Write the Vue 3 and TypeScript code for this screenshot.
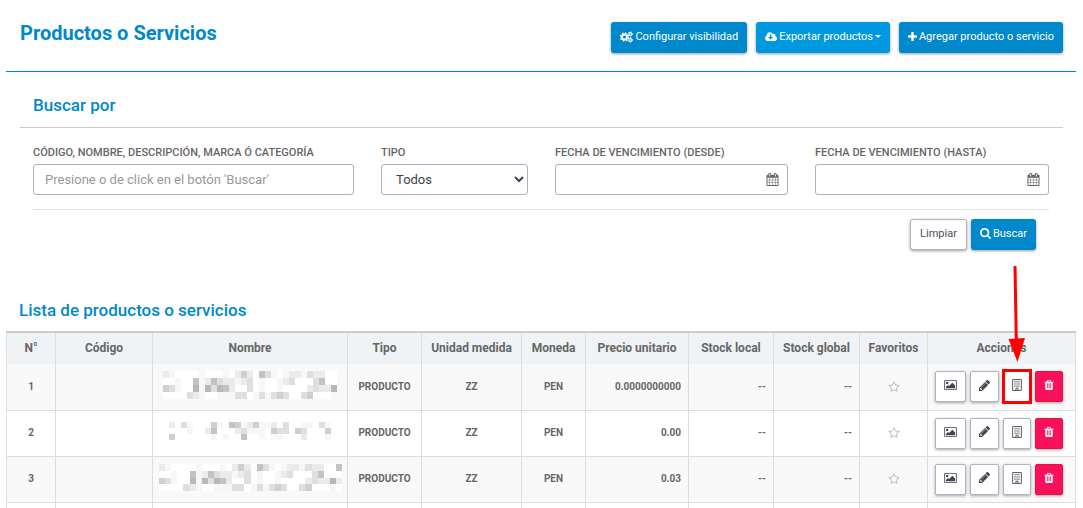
<script setup lang="ts">
import { ref } from 'vue'

interface Mask {
  width: number
  height: number
  lines: string[]
}

interface Product {
  id: number
  price: string
  mask: Mask
}

const shades = ['#ffffff', '#f7f7f7', '#ebebeb', '#dfdfdf', '#cfcfcf', '#c3c3c3', '#b8b8b8']

const products: Product[] = [
  {
    id: 1,
    price: '0.0000000000',
    mask: {
      width: 174,
      height: 28,
      lines: [
        '21000010001024205310122132200',
        '00100512532212301001230003500',
        '43100616365200301001000023226',
        '00003210011133013134300340001',
      ],
    },
  },
  {
    id: 2,
    price: '0.00',
    mask: {
      width: 162,
      height: 18,
      lines: [
        '203100041054124112030011031',
        '000100250002311104330430004',
        '400000010100500101100020001',
      ],
    },
  },
  {
    id: 3,
    price: '0.03',
    mask: {
      width: 183,
      height: 27,
      lines: [
        '210000100010242053101221322005',
        '001005125322123010012300035000',
        '431006163652003010010000232262',
        '000032100111330131343003400010',
      ],
    },
  },
]

const headings = [
  'N°', 'Código', 'Nombre', 'Tipo', 'Unidad medida', 'Moneda',
  'Precio unitario', 'Stock local', 'Stock global', 'Favoritos', 'Acciones',
]

const search = ref('')
const kind = ref('Todos')
const from = ref('')
const to = ref('')

function clearFilters(): void {
  search.value = ''
  kind.value = 'Todos'
  from.value = ''
  to.value = ''
}

const calendarPath =
  'M192 1664h288v-288h-288v288zm352 0h320v-288h-320v288zm-352-352h288v-320h-288v320zm352 0h320v-320h-320v320zm-352-384h288v-288h-288v288zm736 736h320v-288h-320v288zm-384-736h320v-288h-320v288zm768 736h288v-288h-288v288zm-384-352h320v-320h-320v320zm-352-864v-288q0-13-9.500-22.500t-22.500-9.500h-64q-13 0-22.500 9.500t-9.500 22.500v288q0 13 9.500 22.500t22.500 9.500h64q13 0 22.500-9.500t9.500-22.500zm736 864h288v-320h-288v320zm-384-384h320v-288h-320v288zm384 0h288v-288h-288v288zm32-480v-288q0-13-9.500-22.500t-22.500-9.500h-64q-13 0-22.500 9.500t-9.500 22.500v288q0 13 9.500 22.500t22.500 9.500h64q13 0 22.500-9.500t9.500-22.500zm384-64v1280q0 52-38 90t-90 38h-1408q-52 0-90-38t-38-90v-1280q0-52 38-90t90-38h128v-96q0-66 47-113t113-47h64q66 0 113 47t47 113v96h384v-96q0-66 47-113t113-47h64q66 0 113 47t47 113v96h128q52 0 90 38t38 90z'
</script>

<template>
  <main class="page">
    <header class="top">
      <h1>Productos o Servicios</h1>
      <div class="top-actions">
        <button type="button" class="btn primary">
          <svg class="cogs" viewBox="0 0 13 12" aria-hidden="true">
            <g fill="none" stroke="currentColor">
              <circle cx="4.500" cy="6" r="2.600" stroke-width="2" />
              <circle cx="4.500" cy="6" r="4" stroke-width="1.400" stroke-dasharray="1.570 1.570" />
              <circle cx="10.300" cy="3" r="1.400" stroke-width="1.100" />
              <circle cx="10.300" cy="3" r="2.200" stroke-width="0.900" stroke-dasharray="1.150 1.150" />
              <circle cx="10.300" cy="9" r="1.400" stroke-width="1.100" />
              <circle cx="10.300" cy="9" r="2.200" stroke-width="0.900" stroke-dasharray="1.150 1.150" />
            </g>
          </svg>
          <span>Configurar visibilidad</span>
        </button>
        <button type="button" class="btn info">
          <svg class="cloud" viewBox="0 0 1920 1792" aria-hidden="true">
            <path fill="currentColor" d="M1280 928q0-14-9-23t-23-9h-224v-352q0-13-9.500-22.500t-22.500-9.500h-192q-13 0-22.500 9.500t-9.500 22.500v352h-224q-13 0-22.500 9.500t-9.500 22.500q0 14 9 23l352 352q9 9 23 9t23-9l351-351q10-12 10-24zm640 224q0 159-112.500 271.500t-271.500 112.500h-1088q-185 0-316.500-131.500t-131.500-316.500q0-130 70-240t188-165q-2-30-2-43 0-212 150-362t362-150q156 0 285.500 87t188.500 231q71-62 166-62 106 0 181 75t75 181q0 76-41 138 130 31 213.500 135.500t83.500 238.500z" />
          </svg>
          <span>Exportar productos</span>
          <i class="caret"></i>
        </button>
        <button type="button" class="btn primary">
          <svg class="plus" viewBox="192 128 1408 1408" aria-hidden="true">
            <path fill="currentColor" d="M1600 736v192q0 40-28 68t-68 28h-416v416q0 40-28 68t-68 28h-192q-40 0-68-28t-28-68v-416h-416q-40 0-68-28t-28-68v-192q0-40 28-68t68-28h416v-416q0-40 28-68t68-28h192q40 0 68 28t28 68v416h416q40 0 68 28t28 68z" />
          </svg>
          <span>Agregar producto o servicio</span>
        </button>
      </div>
    </header>

    <section class="filters">
      <h2>Buscar por</h2>
      <form @submit.prevent>
        <div class="fields">
          <div class="field">
            <label for="search">Código, nombre, descripción, marca ó categoría</label>
            <input id="search" v-model="search" class="control" type="text" placeholder="Presione o de click en el botón 'Buscar'" />
          </div>
          <div class="field">
            <label for="kind">Tipo</label>
            <select id="kind" v-model="kind" class="control">
              <option>Todos</option>
              <option>Producto</option>
              <option>Servicio</option>
            </select>
          </div>
          <div class="field">
            <label for="from">Fecha de vencimiento (desde)</label>
            <div class="control date">
              <input id="from" v-model="from" type="text" />
              <svg viewBox="0 0 1792 1792" aria-hidden="true"><path :d="calendarPath" fill="currentColor" /></svg>
            </div>
          </div>
          <div class="field">
            <label for="to">Fecha de vencimiento (hasta)</label>
            <div class="control date">
              <input id="to" v-model="to" type="text" />
              <svg viewBox="0 0 1792 1792" aria-hidden="true"><path :d="calendarPath" fill="currentColor" /></svg>
            </div>
          </div>
        </div>
        <div class="form-actions">
          <button type="button" class="btn plain" @click="clearFilters">Limpiar</button>
          <button type="submit" class="btn primary">
            <svg class="lens" viewBox="64 128 1664 1664" aria-hidden="true">
              <path fill="currentColor" d="M1216 832q0-185-131.500-316.500t-316.500-131.500-316.500 131.500-131.500 316.500 131.500 316.500 316.500 131.500 316.500-131.500 131.500-316.500zm512 832q0 52-38 90t-90 38q-54 0-90-38l-343-342q-179 124-399 124-143 0-273.500-55.500t-225-150-150-225-55.500-273.500 55.500-273.500 150-225 225-150 273.500-55.500 273.500 55.500 225 150 150 225 55.500 273.500q0 220-124 399l343 343q37 37 37 90z" />
            </svg>
            <span>Buscar</span>
          </button>
        </div>
      </form>
    </section>

    <section class="list">
      <h2>Lista de productos o servicios</h2>
      <table>
        <colgroup>
          <col class="c-num" /><col class="c-code" /><col /><col class="c-type" /><col class="c-unit" />
          <col class="c-coin" /><col class="c-price" /><col class="c-local" /><col class="c-global" />
          <col class="c-fav" /><col class="c-act" />
        </colgroup>
        <thead>
          <tr>
            <th v-for="heading in headings" :key="heading" scope="col">{{ heading }}</th>
          </tr>
        </thead>
        <tbody>
          <tr v-for="(product, index) in products" :key="product.id">
            <td>{{ product.id }}</td>
            <td></td>
            <td class="name">
              <svg
                class="mask"
                :width="product.mask.width"
                :height="product.mask.height"
                :viewBox="`0 0 ${product.mask.lines[0].length} ${product.mask.lines.length}`"
                preserveAspectRatio="none"
                shape-rendering="crispEdges"
                aria-hidden="true"
              >
                <template v-for="(line, y) in product.mask.lines" :key="y">
                  <rect v-for="(shade, x) in line.split('')" :key="x" :x="x" :y="y" width="1" height="1" :fill="shades[Number(shade)]" />
                </template>
              </svg>
            </td>
            <td>PRODUCTO</td>
            <td>ZZ</td>
            <td>PEN</td>
            <td class="number">{{ product.price }}</td>
            <td class="number">--</td>
            <td class="number">--</td>
            <td>
              <button type="button" class="star" aria-label="Favorito">
                <svg viewBox="0 0 1792 1792" aria-hidden="true">
                  <path fill="currentColor" d="M1201 1004l306-297-422-62-189-382-189 382-422 62 306 297-73 421 378-199 377 199zm527-357q0 22-26 48l-363 354 86 500q1 7 1 20 0 50-41 50-19 0-40-12l-449-236-449 236q-22 12-40 12-21 0-31.500-14.500t-10.500-35.500q0-6 2-20l86-500-364-354q-25-27-25-48 0-37 56-46l502-73 225-455q19-41 49-41t49 41l225 455 502 73q56 9 56 46z" />
                </svg>
              </button>
            </td>
            <td>
              <div class="actions">
                <button type="button" class="act" aria-label="Imagen">
                  <svg class="picture" viewBox="-64 128 1920 1536" aria-hidden="true">
                    <path fill="currentColor" d="M576 576q0 80-56 136t-136 56-136-56-56-136 56-136 136-56 136 56 56 136zm1024 384v448h-1408v-192l320-320 160 160 512-512zm96-704h-1600q-13 0-22.500 9.500t-9.500 22.500v1216q0 13 9.500 22.500t22.500 9.500h1600q13 0 22.500-9.500t9.500-22.500v-1216q0-13-9.500-22.500t-22.500-9.500zm160 32v1216q0 66-47 113t-113 47h-1600q-66 0-113-47t-47-113v-1216q0-66 47-113t113-47h1600q66 0 113 47t47 113z" />
                  </svg>
                </button>
                <button type="button" class="act" aria-label="Editar">
                  <svg class="pencil" viewBox="128 148 1516 1516" aria-hidden="true">
                    <path fill="currentColor" d="M491 1536l91-91-235-235-91 91v107h128v128h107zm523-928q0-22-22-22-10 0-17 7l-542 542q-7 7-7 17 0 22 22 22 10 0 17-7l542-542q7-7 7-17zm-54-192l416 416-832 832h-416v-416zm683 96q0 53-37 90l-166 166-416-416 166-165q36-38 90-38 53 0 91 38l235 234q37 39 37 91z" />
                  </svg>
                </button>
                <span class="stock">
                  <button type="button" class="act" aria-label="Almacenes">
                    <svg class="building" viewBox="0 0 9 11" aria-hidden="true">
                      <path fill="none" stroke="currentColor" stroke-width="0.800" d="M0.500 0.500h8v10h-8zM3.500 10.500v-2h2v2" />
                      <path fill="none" stroke="currentColor" stroke-width="0.900" stroke-dasharray="1 0.800" d="M2.200 2.200h4.600M2.200 3.800h4.600M2.200 5.400h4.600M2.200 7h4.600" />
                    </svg>
                  </button>
                  <template v-if="index === 0">
                    <i class="frame"></i>
                    <svg class="arrow" width="18" height="97" viewBox="0 0 18 97" aria-hidden="true">
                      <path d="M7 1L8.300 76" stroke="#ff0000" stroke-width="3" />
                      <path d="M0.500 74L17 73L9.500 97z" fill="#ff0000" />
                    </svg>
                  </template>
                </span>
                <button type="button" class="act danger" aria-label="Eliminar">
                  <svg class="trash" viewBox="192 128 1408 1536" aria-hidden="true">
                    <path fill="currentColor" d="M704 1376v-704q0-14-9-23t-23-9h-64q-14 0-23 9t-9 23v704q0 14 9 23t23 9h64q14 0 23-9t9-23zm256 0v-704q0-14-9-23t-23-9h-64q-14 0-23 9t-9 23v704q0 14 9 23t23 9h64q14 0 23-9t9-23zm256 0v-704q0-14-9-23t-23-9h-64q-14 0-23 9t-9 23v704q0 14 9 23t23 9h64q14 0 23-9t9-23zm-544-992h448l-48-117q-7-9-17-11h-317q-10 2-17 11zm928 32v64q0 14-9 23t-23 9h-96v948q0 83-47 143.500t-113 60.500h-832q-66 0-113-58.500t-47-141.500v-952h-96q-14 0-23-9t-9-23v-64q0-14 9-23t23-9h309l70-167q15-37 54-63t79-26h320q40 0 79 26t54 63l70 167h309q14 0 23 9t9 23z" />
                  </svg>
                </button>
              </div>
            </td>
          </tr>
          <tr>
            <td v-for="heading in headings" :key="heading"></td>
          </tr>
        </tbody>
      </table>
    </section>
  </main>
</template>

<style>
body {
  margin: 0;
  background: #ffffff;
}
</style>

<style scoped>
* {
  box-sizing: border-box;
}

.page {
  height: 100vh;
  overflow: hidden;
  padding: 0 7px 0 6px;
  font-family: Roboto, "Liberation Sans", sans-serif;
  color: #666666;
}

h1,
h2 {
  margin: 0;
  color: #0088cc;
  font-weight: 500;
}

h1 {
  font-size: 20px;
  font-weight: 700;
  line-height: 24px;
}

h2 {
  font-size: 17px;
  line-height: 20px;
}

.top {
  display: flex;
  justify-content: space-between;
  align-items: flex-start;
  padding: 21px 13px 18px 14px;
  border-bottom: 1px solid #0088cc;
}

.top-actions {
  display: flex;
  gap: 9px;
  padding-top: 1px;
}

.btn {
  display: flex;
  align-items: center;
  justify-content: center;
  gap: 2px;
  height: 31px;
  padding: 0 9px 2px;
  border: 0;
  border-radius: 3px;
  box-shadow: 0 1px 3px rgba(0, 0, 0, 0.4);
  font-family: inherit;
  font-size: 11px;
  line-height: 16px;
  white-space: nowrap;
  cursor: pointer;
}

.primary {
  background: #0088cc;
  color: #ffffff;
}

.info {
  background: #0099e0;
  color: #ffffff;
}

.plain {
  border: 1px solid #adb5c4;
  background: #ffffff;
  color: #4a505e;
}

.cogs {
  width: 13px;
  height: 12px;
}

.cloud {
  width: 12px;
  height: 12px;
}

.plus {
  width: 9px;
  height: 9px;
}

.lens {
  width: 11px;
  height: 11px;
}

.caret {
  border: 3px solid transparent;
  border-top-color: currentColor;
  border-bottom: 0;
}

.filters {
  padding: 23px 13px 0 14px;
}

.filters h2 {
  padding: 0 13px 12px;
  border-bottom: 1px solid #cccccc;
}

form {
  padding: 18px 14px 0 13px;
}

.fields {
  display: grid;
  grid-template-columns: 321fr 147fr 233fr 234fr;
  gap: 27px;
  padding-bottom: 14px;
  border-bottom: 1px solid #e5e5e5;
}

.field {
  display: flex;
  flex-direction: column;
  min-width: 0;
}

label {
  padding-bottom: 4px;
  font-size: 11px;
  font-weight: 500;
  line-height: 14px;
  text-transform: uppercase;
  white-space: nowrap;
}

.control {
  width: 100%;
  height: 31px;
  padding: 0 11px;
  border: 1px solid #a9b2c0;
  border-radius: 3px;
  background: #ffffff;
  color: #3c424d;
  font-family: inherit;
  font-size: 13px;
}

.control::placeholder {
  color: #999999;
  opacity: 1;
}

select.control {
  padding: 0 0 0 10px;
}

.date {
  display: flex;
  align-items: center;
  padding: 0 8px 0 11px;
  color: #666666;
}

.date input {
  flex: 1;
  min-width: 0;
  border: 0;
  outline: 0;
  font: inherit;
}

.date svg {
  width: 13px;
  height: 13px;
}

.form-actions {
  display: flex;
  justify-content: flex-end;
  gap: 4px;
  padding: 9px 13px 0 0;
}

.list {
  padding-top: 50px;
}

.list h2 {
  padding: 0 13px 11px;
}

table {
  width: 100%;
  table-layout: fixed;
  border-collapse: collapse;
  border-top: 2px solid #cccccc;
  font-size: 10px;
  font-weight: 700;
}

.c-num { width: 49px; }
.c-code { width: 97px; }
.c-type { width: 74px; }
.c-unit { width: 100px; }
.c-coin { width: 64px; }
.c-price { width: 103px; }
.c-local { width: 85px; }
.c-global { width: 86px; }
.c-fav { width: 68px; }
.c-act { width: 148px; }

th {
  height: 32px;
  padding: 0 0 1px;
  border: 1px solid #dddddd;
  border-bottom: 0;
  background: #eff3f6;
  font-size: 12px;
  font-weight: 700;
  line-height: 16px;
  white-space: nowrap;
}

td {
  height: 46px;
  padding: 0;
  border: 1px solid #dddddd;
  line-height: 14px;
  text-align: center;
}

tbody tr:first-child td {
  border-top: 0;
}

tbody tr:nth-child(odd) td {
  background: #f9f9f9;
}

td.number {
  padding-right: 7px;
  text-align: right;
}

.mask {
  display: block;
  margin: 0 auto;
}

td.name {
  padding-bottom: 4px;
}

.star {
  display: block;
  margin: 0 auto;
  padding: 0;
  border: 0;
  background: none;
  color: #b8bcc2;
  cursor: pointer;
}

.star svg {
  display: block;
  width: 12px;
  height: 12px;
}

.actions {
  display: flex;
  gap: 4px;
  padding-left: 7px;
}

.act {
  display: flex;
  align-items: center;
  justify-content: center;
  height: 31px;
  padding: 0 8px 3px;
  border: 1px solid #adb5c4;
  border-radius: 2px;
  background: #ffffff;
  box-shadow: 0 1px 3px rgba(0, 0, 0, 0.35);
  color: #3f4550;
  cursor: pointer;
}

.danger {
  border-color: #e3173e;
  background: #f9105c;
  color: #ffffff;
}

.picture {
  width: 13px;
  height: 10px;
}

.pencil {
  width: 11px;
  height: 11px;
}

.building {
  width: 10px;
  height: 12px;
}

.trash {
  width: 10px;
  height: 10px;
}

.stock {
  position: relative;
}

.frame {
  position: absolute;
  inset: -2px -1px;
  border: 3px solid #ff0000;
  pointer-events: none;
}

.arrow {
  position: absolute;
  bottom: 40px;
  left: 5px;
  pointer-events: none;
}
</style>
